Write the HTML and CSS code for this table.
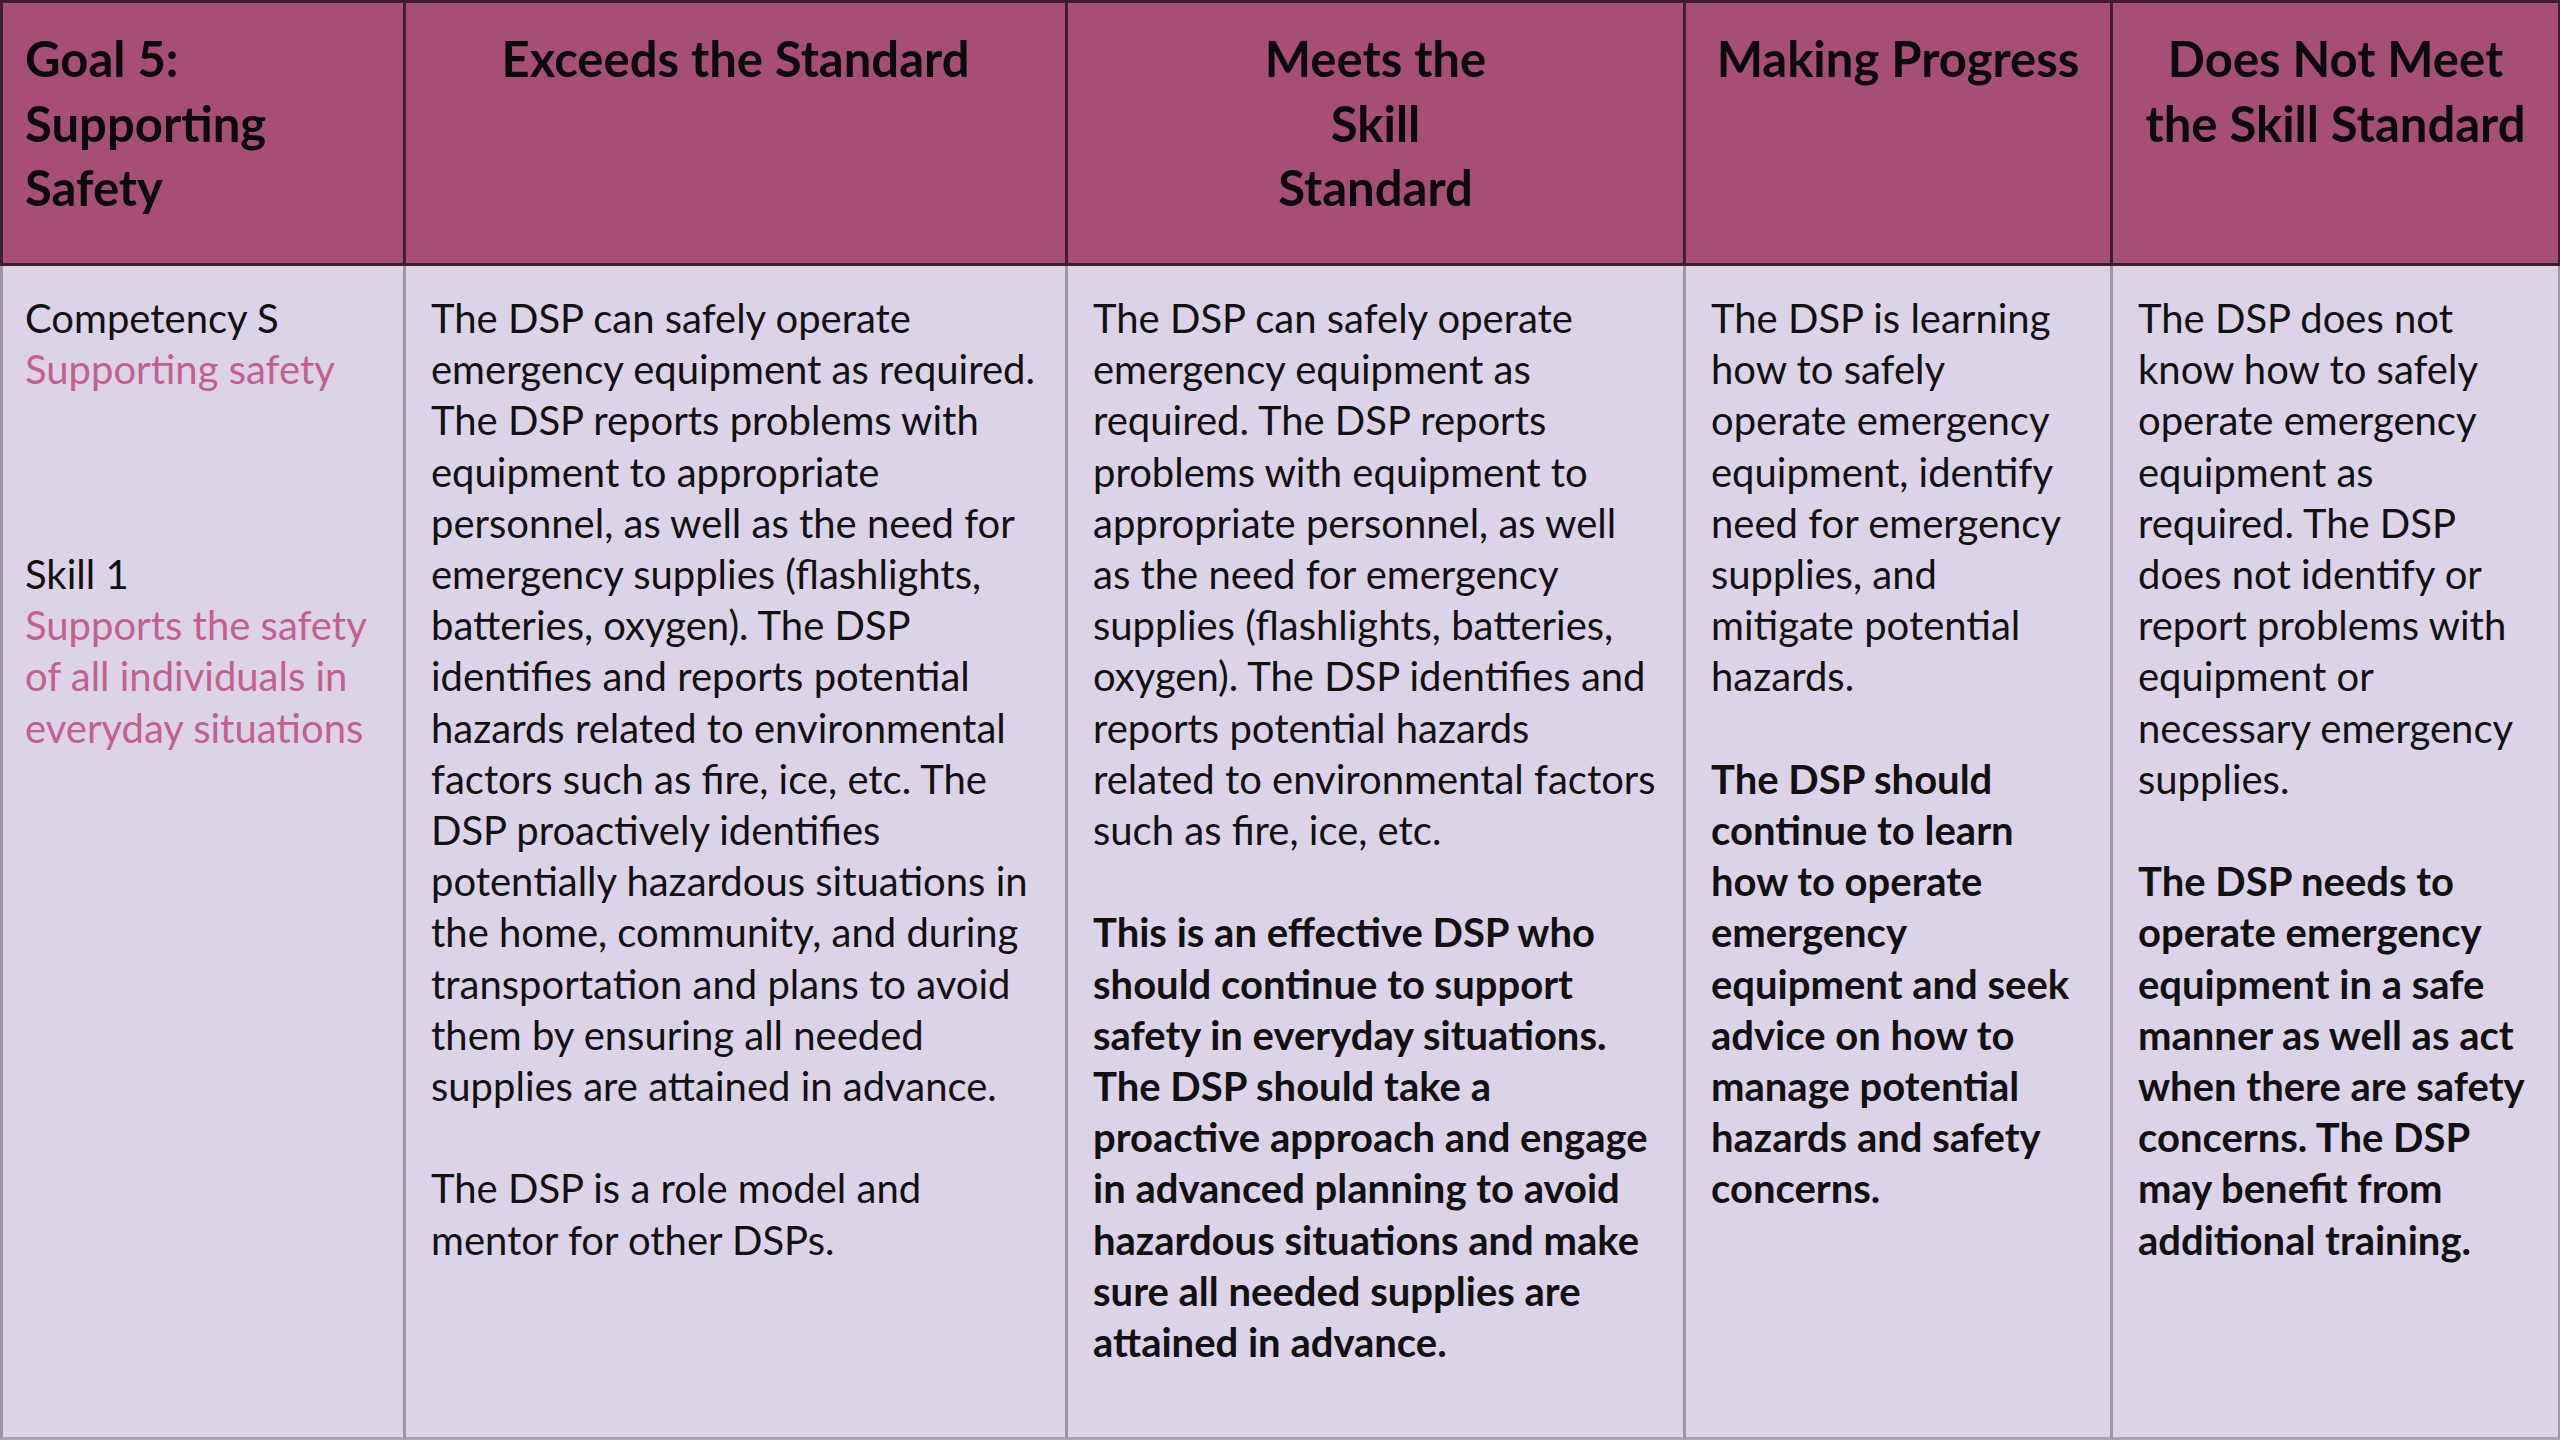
FILE: index.html
```html
<!DOCTYPE html>
<html lang="en">
<head>
<meta charset="utf-8">
<title>Goal 5: Supporting Safety</title>
<link rel="stylesheet" href="styles.css">
</head>
<body>
<div class="rubric">
  <div class="hcell hcell-first left">Goal 5:<br>Supporting<br>Safety</div>
  <div class="hcell">Exceeds the Standard</div>
  <div class="hcell">Meets the<br>Skill<br>Standard</div>
  <div class="hcell">Making Progress</div>
  <div class="hcell hcell-last">Does Not Meet<br>the Skill Standard</div>

  <div class="bcell bcell-first">
    <p>Competency S<br><span class="pink">Supporting safety</span></p>
    <p class="gap3">Skill 1<br><span class="pink">Supports the safety<br>of all individuals in<br>everyday situations</span></p>
  </div>
  <div class="bcell">
    <p>The DSP can safely operate<br>emergency equipment as required.<br>The DSP reports problems with<br>equipment to appropriate<br>personnel, as well as the need for<br>emergency supplies (flashlights,<br>batteries, oxygen). The DSP<br>identifies and reports potential<br>hazards related to environmental<br>factors such as fire, ice, etc. The<br>DSP proactively identifies<br>potentially hazardous situations in<br>the home, community, and during<br>transportation and plans to avoid<br>them by ensuring all needed<br>supplies are attained in advance.</p>
    <p class="gap1">The DSP is a role model and<br>mentor for other DSPs.</p>
  </div>
  <div class="bcell">
    <p>The DSP can safely operate<br>emergency equipment as<br>required. The DSP reports<br>problems with equipment to<br>appropriate personnel, as well<br>as the need for emergency<br>supplies (flashlights, batteries,<br>oxygen). The DSP identifies and<br>reports potential hazards<br>related to environmental factors<br>such as fire, ice, etc.</p>
    <p class="gap1 bold">This is an effective DSP who<br>should continue to support<br>safety in everyday situations.<br>The DSP should take a<br>proactive approach and engage<br>in advanced planning to avoid<br>hazardous situations and make<br>sure all needed supplies are<br>attained in advance.</p>
  </div>
  <div class="bcell">
    <p>The DSP is learning<br>how to safely<br>operate emergency<br>equipment, identify<br>need for emergency<br>supplies, and<br>mitigate potential<br>hazards.</p>
    <p class="gap1 bold">The DSP should<br>continue to learn<br>how to operate<br>emergency<br>equipment and seek<br>advice on how to<br>manage potential<br>hazards and safety<br>concerns.</p>
  </div>
  <div class="bcell bcell-last">
    <p>The DSP does not<br>know how to safely<br>operate emergency<br>equipment as<br>required. The DSP<br>does not identify or<br>report problems with<br>equipment or<br>necessary emergency<br>supplies.</p>
    <p class="gap1 bold">The DSP needs to<br>operate emergency<br>equipment in a safe<br>manner as well as act<br>when there are safety<br>concerns. The DSP<br>may benefit from<br>additional training.</p>
  </div>
</div>
</body>
</html>
```

FILE: styles.css
```css
html, body {
  margin: 0;
  padding: 0;
  background: #dcd3e8;
}

.rubric {
  display: grid;
  grid-template-columns: 406px 662px 618px 427px 447px;
  grid-template-rows: 266px 1174px;
  width: 2560px;
  height: 1440px;
  font-family: "Lato", "Liberation Sans", sans-serif;
  color: #111111;
}

.hcell {
  box-sizing: border-box;
  background: #a74e77;
  border-top: 3px solid #3e1f31;
  border-right: 3px solid #3e1f31;
  border-bottom: 3px solid #3e1f31;
  padding: 23px 8px 0 8px;
  font-size: 49px;
  font-weight: 700;
  line-height: 64.5px;
  text-align: center;
  color: #0a0a0a;
  white-space: nowrap;
}

.hcell-first {
  border-left: 3px solid #3e1f31;
}

.hcell.left {
  text-align: left;
  padding-left: 22px;
}

.hcell-last {
  border-right-width: 2px;
}

.bcell {
  box-sizing: border-box;
  background: #dcd3e8;
  border-right: 3px solid #9d97a4;
  border-bottom: 3px solid #aaa3b3;
  padding: 27px 8px 0 25px;
  font-size: 40px;
  line-height: 51.2px;
  white-space: nowrap;
}

.bcell-first {
  border-left: 3px solid #9d97a4;
  padding-left: 22px;
}

.bcell-last {
  border-right-width: 2px;
}

.bcell p {
  margin: 0;
}

.bcell p.gap1 {
  margin-top: 51.2px;
}

.bcell p.gap3 {
  margin-top: 153.6px;
}

.pink {
  color: #c2608f;
}

.bold {
  font-weight: 700;
}
```
